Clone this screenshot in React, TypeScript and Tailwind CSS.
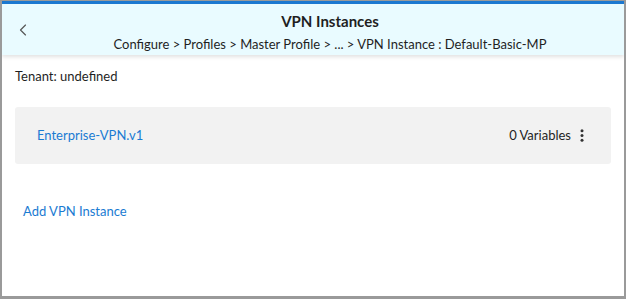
import { ChevronLeft } from "lucide-react"

function App() {
  return (
    <div className="w-[626px] h-[299px] bg-white font-['Lato',sans-serif] text-[#1f1f1f] border-l-2 border-r-2 border-b-[3px] border-t border-[#9a9a9a] flex flex-col overflow-hidden">
      <header className="relative bg-[#e9fbff] border-t-[3px] border-[#1b78d0] h-[54px] shadow-[0_2px_4px_rgba(0,0,0,0.12)] flex">
        <button className="absolute left-[11px] top-[16px] text-[#555]">
          <ChevronLeft className="w-5 h-5" strokeWidth={1.4} />
        </button>
        <div className="flex-1 flex flex-col items-center pl-[34px] pt-[7px]">
          <h1 className="text-[15px] font-bold leading-5">VPN Instances</h1>
          <p className="text-[13px] leading-5 mt-[3px]">
            Configure &gt; Profiles &gt; Master Profile &gt; ... &gt; VPN Instance : Default-Basic-MP
          </p>
        </div>
      </header>

      <div className="px-[13px] pt-[11px] text-[13px] leading-5">Tenant: undefined</div>

      <div className="mx-[13px] mt-[21px] h-[57px] bg-[#f2f2f2] rounded-[3px] flex items-center pl-[22px] pr-[27px]">
        <span className="text-[13px] text-[#1a7bd2]">Enterprise-VPN.v1</span>
        <span className="ml-auto text-[13px]">0 Variables</span>
        <svg className="ml-[9px]" width="4" height="13" viewBox="0 0 4 13">
          <circle cx="2" cy="1.8" r="1.5" fill="#333" />
          <circle cx="2" cy="6.5" r="1.5" fill="#333" />
          <circle cx="2" cy="11.2" r="1.5" fill="#333" />
        </svg>
      </div>

      <div className="px-[21px] mt-[37px] text-[13px] text-[#1a7bd2] leading-5">Add VPN Instance</div>
    </div>
  )
}

export default App
